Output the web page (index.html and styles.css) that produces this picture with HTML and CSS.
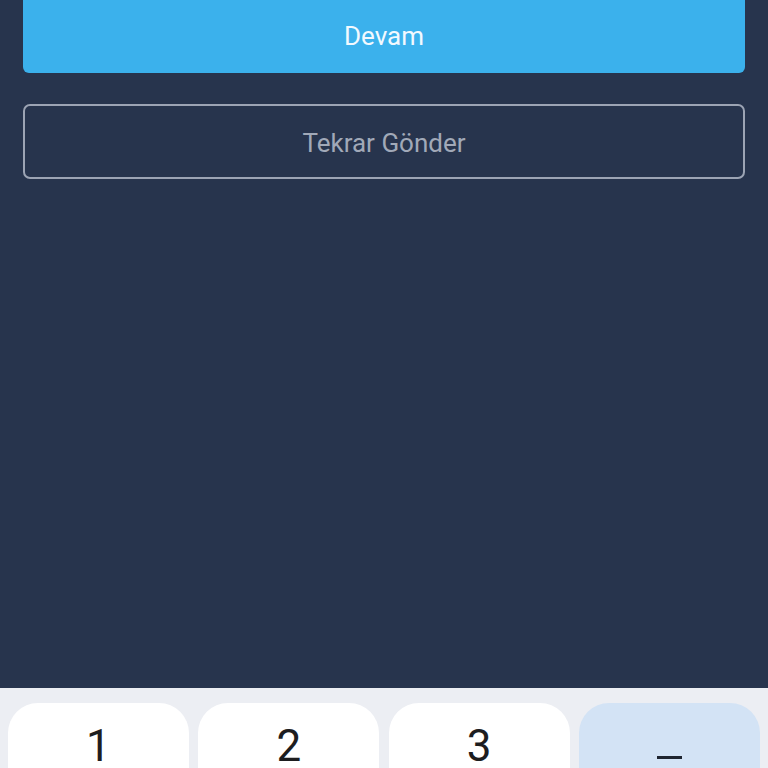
FILE: index.html
```html
<!DOCTYPE html>
<html lang="tr">
<head>
<meta charset="utf-8">
<link rel="stylesheet" href="styles.css">
</head>
<body>
<div class="screen">
  <div class="content">
    <button class="btn btn-primary">Devam</button>
    <button class="btn btn-outline">Tekrar Gönder</button>
  </div>
  <div class="keyboard">
    <div class="key"><span class="digit">1</span></div>
    <div class="key"><span class="digit">2</span></div>
    <div class="key"><span class="digit">3</span></div>
    <div class="key key-fn"><span class="dash"></span></div>
  </div>
</div>
</body>
</html>
```
FILE: styles.css
```css
html, body {
  margin: 0;
  padding: 0;
}
body {
  background: #27344d;
  font-family: Roboto, "Liberation Sans", sans-serif;
  overflow: hidden;
}
.screen {
  width: 768px;
  height: 768px;
  display: flex;
  flex-direction: column;
  overflow: hidden;
}
.content {
  flex: 1;
  display: flex;
  flex-direction: column;
  gap: 31px;
  padding: 0 23px;
}
.btn {
  display: flex;
  align-items: center;
  justify-content: center;
  width: 100%;
  font-family: inherit;
  font-size: 26px;
  padding: 0;
  margin: 0;
  box-sizing: border-box;
}
.btn-primary {
  height: 73px;
  background: #3bb1ec;
  color: #f2f9ff;
  border: none;
  border-radius: 0 0 6px 6px;
  padding-bottom: 1px;
}
.btn-outline {
  height: 75px;
  background: transparent;
  color: #a1a9b8;
  border: 2px solid #9ca4b4;
  border-radius: 7px;
  padding-top: 2px;
}
.keyboard {
  height: 80px;
  background: #eceef3;
  display: grid;
  grid-template-columns: repeat(4, 1fr);
  column-gap: 9.5px;
  padding: 15px 8px 0;
  box-sizing: border-box;
  flex-shrink: 0;
}
.key {
  height: 100px;
  background: #ffffff;
  border-radius: 30px;
  display: flex;
  justify-content: center;
  align-items: flex-start;
}
.key-fn {
  background: #d3e3f5;
}
.digit {
  padding-top: 21px;
  font-size: 44px;
  line-height: 1;
  color: #1d1d1f;
  font-weight: 400;
}
.dash {
  margin-top: 53px;
  width: 25px;
  height: 3px;
  background: #1f2530;
}
```
